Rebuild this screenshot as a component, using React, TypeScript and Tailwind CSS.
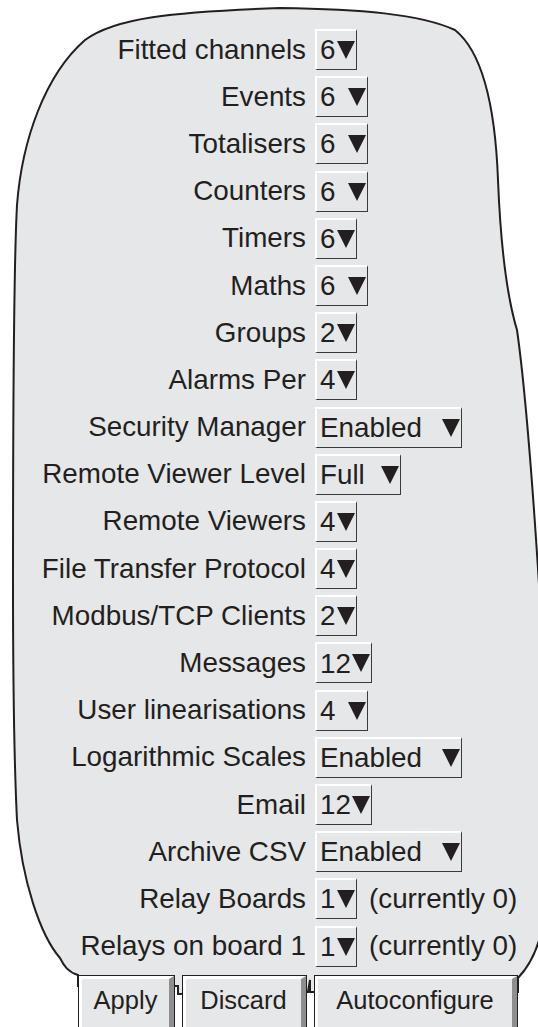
import React from "react";

type Row = {
  label: string;
  value: string;
  width: number;
  note?: string;
};

const rows: Row[] = [
  { label: "Fitted channels", value: "6", width: 42 },
  { label: "Events", value: "6", width: 53 },
  { label: "Totalisers", value: "6", width: 53 },
  { label: "Counters", value: "6", width: 53 },
  { label: "Timers", value: "6", width: 42 },
  { label: "Maths", value: "6", width: 53 },
  { label: "Groups", value: "2", width: 42 },
  { label: "Alarms Per", value: "4", width: 42 },
  { label: "Security Manager", value: "Enabled", width: 147 },
  { label: "Remote Viewer Level", value: "Full", width: 86 },
  { label: "Remote Viewers", value: "4", width: 42 },
  { label: "File Transfer Protocol", value: "4", width: 42 },
  { label: "Modbus/TCP Clients", value: "2", width: 42 },
  { label: "Messages", value: "12", width: 57 },
  { label: "User linearisations", value: "4", width: 53 },
  { label: "Logarithmic Scales", value: "Enabled", width: 147 },
  { label: "Email", value: "12", width: 57 },
  { label: "Archive CSV", value: "Enabled", width: 147 },
  { label: "Relay Boards", value: "1", width: 42, note: "(currently 0)" },
  { label: "Relays on board 1", value: "1", width: 42, note: "(currently 0)" },
];

// outline of the panel, drawn behind the rows
const Outline = () => (
  <svg
    className="absolute inset-0"
    width={538}
    height={1027}
    viewBox="0 0 538 1027"
  >
    <path
      d="M 78 975 C 68 972, 64 966, 60 958 C 40 935, 22 880, 17 820 C 14 760, 13 650, 13 580 C 13 450, 14 260, 17 205 C 22 140, 45 75, 85 40 C 115 18, 170 12, 280 8 C 360 9, 420 14, 455 30 C 480 50, 495 100, 498 180 C 500 230, 505 290, 517 330 C 527 400, 535 520, 540 600 L 545 900 C 544 935, 535 960, 518 978 L 518 992 L 310 992 L 310 980 L 308 992 L 178 994 L 178 986 L 78 986 Z"
      fill="#e6e7e8"
      stroke="#231f20"
      strokeWidth={2}
    />
  </svg>
);

const Arrow = () => (
  <svg width={18} height={18} viewBox="0 0 18 18">
    <polygon points="0,0 18,0 9,18" fill="#231f20" />
  </svg>
);

const Dropdown = ({ value, width }: { value: string; width: number }) => (
  <div
    className="flex h-[41px] items-center justify-between border-t-2 border-l-2 border-white border-r-[1.5px] border-b-[1.5px] border-r-[#3a3a3a] border-b-[#3a3a3a] pl-[3px] pr-[1px]"
    style={{ width }}
  >
    <span>{value}</span>
    <Arrow />
  </div>
);

const Button = ({ label, width }: { label: string; width: number }) => (
  <div
    className="h-[60px] border border-[#231f20] bg-[#e6e7e8]"
    style={{ width }}
  >
    <div className="flex h-full items-start justify-center border-t-[3px] border-l-[3px] border-white border-r-[5px] border-b-[5px] border-r-[#8e8e8e] border-b-[#8e8e8e] pt-[9px] text-[25.5px] leading-none">
      {label}
    </div>
  </div>
);

export default function App() {
  return (
    <div
      className="relative h-[1027px] w-[538px] overflow-hidden bg-white text-[#231f20]"
      style={{ fontFamily: '"Liberation Sans", Arial, sans-serif' }}
    >
      <Outline />
      <div className="relative flex flex-col gap-[6.2px] pt-[29px] text-[27.8px] leading-none">
        {rows.map((row) => (
          <div key={row.label} className="flex h-[41px] items-center">
            <div className="w-[306px] text-right whitespace-nowrap">
              {row.label}
            </div>
            <div className="ml-[9px]">
              <Dropdown value={row.value} width={row.width} />
            </div>
            {row.note && <div className="ml-[12px] whitespace-nowrap">{row.note}</div>}
          </div>
        ))}
      </div>
      <div className="relative mt-[8px] flex gap-[7px] pl-[78px]">
        <Button label="Apply" width={97} />
        <Button label="Discard" width={125} />
        <Button label="Autoconfigure" width={204} />
      </div>
    </div>
  );
}
